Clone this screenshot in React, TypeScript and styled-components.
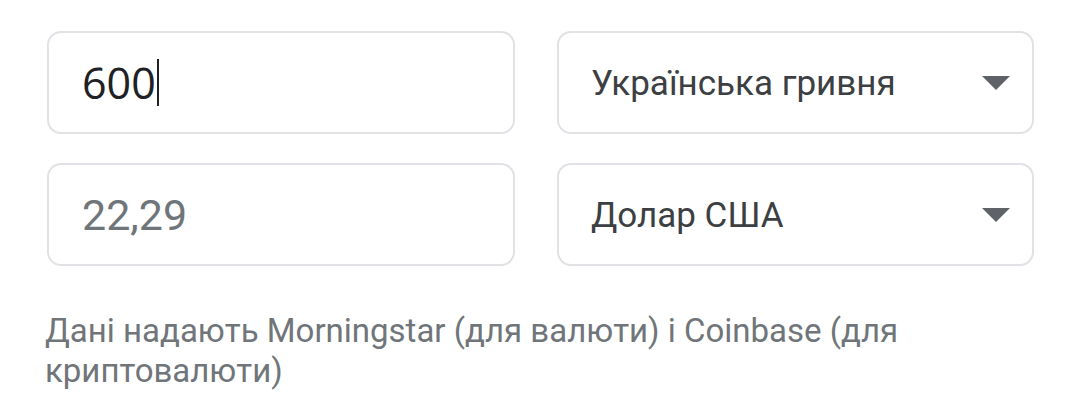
import React from "react";
import styled, { createGlobalStyle } from "styled-components";

const Global = createGlobalStyle`
  html, body { margin: 0; padding: 0; background: #ffffff; }
  body { font-family: Roboto, "Liberation Sans", sans-serif; }
`;

const Page = styled.div`
  padding: 31px 0 0 47px;
  width: 1080px;
  height: 407px;
  box-sizing: border-box;
  overflow: hidden;
`;

const Grid = styled.div`
  display: grid;
  grid-template-columns: 468px 477px;
  column-gap: 42px;
  row-gap: 29px;
`;

const Field = styled.div`
  box-sizing: border-box;
  height: 103px;
  border: 2px solid #e0e2e5;
  border-radius: 14px;
  display: flex;
  align-items: center;
  padding: 0 22px 0 33px;
`;

const NumberText = styled.span<{ $muted?: boolean }>`
  font-family: ${(p) => (p.$muted ? `Roboto, sans-serif` : `"Open Sans", "Noto Sans", sans-serif`)};
  font-size: 43px;
  color: ${(p) => (p.$muted ? "#70757a" : "#202124")};
  display: flex;
  align-items: center;
  margin-top: ${(p) => (p.$muted ? "0" : "-1px")};
`;

const Caret = styled.span`
  display: inline-block;
  width: 2px;
  height: 47px;
  background: #202124;
  margin-left: 1px;
`;

const SelectText = styled.span`
  flex: 1;
  font-family: Roboto, sans-serif;
  font-size: 35px;
  color: #3c4043;
  margin-left: -1px;
  margin-top: 1px;
`;

const Arrow = styled.svg`
  width: 28px;
  height: 14px;
  flex: none;
`;

const Note = styled.p`
  margin: 45px 0 0 -2px;
  font-family: Roboto, sans-serif;
  font-size: 33px;
  line-height: 40px;
  color: #70757a;
  width: 900px;
`;

const DropArrow = () => (
  <Arrow viewBox="0 0 28 14">
    <polygon points="0,0 28,0 14,14" fill="#5f6368" />
  </Arrow>
);

export default function App() {
  return (
    <>
      <Global />
      <Page>
        <Grid>
          <Field>
            <NumberText>
              600
              <Caret />
            </NumberText>
          </Field>
          <Field>
            <SelectText>Українська гривня</SelectText>
            <DropArrow />
          </Field>
          <Field>
            <NumberText $muted>22,29</NumberText>
          </Field>
          <Field>
            <SelectText>Долар США</SelectText>
            <DropArrow />
          </Field>
        </Grid>
        <Note>
          Дані надають Morningstar (для валюти) і Coinbase (для криптовалюти)
        </Note>
      </Page>
    </>
  );
}
